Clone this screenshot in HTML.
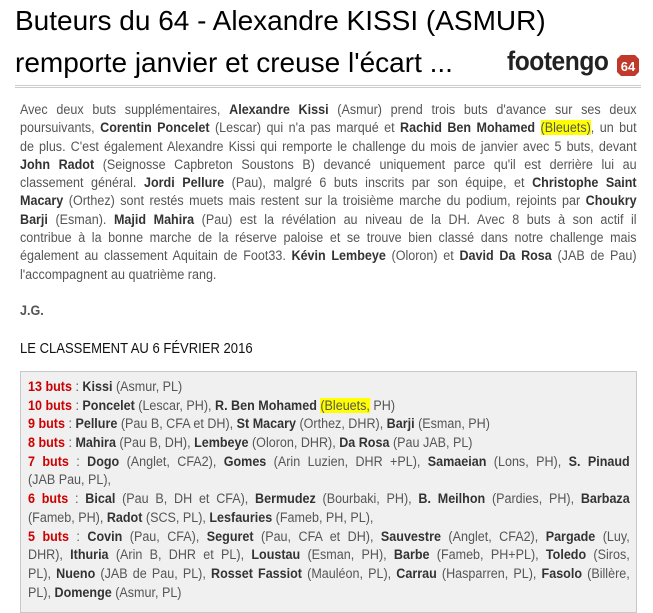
<!DOCTYPE html>
<html><head><meta charset="utf-8"><style>
body{margin:0;background:#fff;width:653px;height:602px;overflow:hidden;font-family:"Liberation Sans",Arial,sans-serif;position:relative}
.t{position:absolute;left:15px;white-space:nowrap;font-size:28px;color:#000}
.rule{position:absolute;left:15px;top:85px;width:626px;height:1px;border-top:1px solid #ccc;border-bottom:1px solid #ccc}
.logo{position:absolute;left:507px;top:46px;font-weight:bold;font-size:27px;color:#222;letter-spacing:-0.5px;transform:scaleX(0.91);transform-origin:0 0;white-space:nowrap}
.hex{position:absolute;left:617px;top:55px;width:22px;height:21px}
.wrap{position:absolute;left:20px;width:663px;font-size:13.5px;color:#555;transform:scaleX(0.93);transform-origin:0 0}
.l{white-space:nowrap;text-align:justify;text-align-last:justify;height:18.3px;line-height:18.3px}
.l.e{text-align-last:left}
b{color:#333}
.y{background:#ff0}
.box{position:absolute;left:20px;top:371px;width:615px;height:240px;background:#f0f0f0;border:1px solid #c8c8c8}
.box .wrap{left:7px;top:6px;width:647px}
.box .l{height:18.7px;line-height:18.7px}
.r{color:#c00}
</style></head><body>
<div class="t" style="top:5px">Buteurs du 64 - Alexandre KISSI (ASMUR)</div>
<div class="t" style="top:47px">remporte janvier et creuse l'écart ...</div>
<div class="logo">footengo</div>
<svg class="hex" viewBox="0 0 22 21"><polygon points="4,0 18,0 22,4 22,17 18,21 4,21 0,17 0,4" fill="#c0392b"/><text x="11" y="16" font-size="13" font-weight="bold" fill="#fff" text-anchor="middle" font-family="Liberation Sans">64</text></svg>
<div class="rule"></div>
<div class="wrap" style="top:101px">
<div class="l">Avec deux buts supplémentaires, <b>Alexandre Kissi</b> (Asmur) prend trois buts d'avance sur ses deux</div>
<div class="l">poursuivants, <b>Corentin Poncelet</b> (Lescar) qui n'a pas marqué et <b>Rachid Ben Mohamed</b> <span class="y">(Bleuets)</span>, un but</div>
<div class="l">de plus. C'est également Alexandre Kissi qui remporte le challenge du mois de janvier avec 5 buts, devant</div>
<div class="l"><b>John Radot</b> (Seignosse Capbreton Soustons B) devancé uniquement parce qu'il est derrière lui au</div>
<div class="l">classement général. <b>Jordi Pellure</b> (Pau), malgré 6 buts inscrits par son équipe, et <b>Christophe Saint</b></div>
<div class="l"><b>Macary</b> (Orthez) sont restés muets mais restent sur la troisième marche du podium, rejoints par <b>Choukry</b></div>
<div class="l"><b>Barji</b> (Esman). <b>Majid Mahira</b> (Pau) est la révélation au niveau de la DH. Avec 8 buts à son actif il</div>
<div class="l">contribue à la bonne marche de la réserve paloise et se trouve bien classé dans notre challenge mais</div>
<div class="l">également au classement Aquitain de Foot33. <b>Kévin Lembeye</b> (Oloron) et <b>David Da Rosa</b> (JAB de Pau)</div>
<div class="l e">l'accompagnent au quatrième rang.</div>
<div class="l e">&nbsp;</div>
<div class="l e"><b style="color:#555">J.G.</b></div>
</div>
<div style="position:absolute;left:20px;top:341px;font-size:14.5px;color:#111;white-space:nowrap;transform:scaleX(0.9);transform-origin:0 0">LE CLASSEMENT AU 6 FÉVRIER 2016</div>
<div class="box"><div class="wrap">
<div class="l e"><b class="r">13 buts</b> : <b>Kissi</b> (Asmur, PL)</div>
<div class="l e"><b class="r">10 buts</b> : <b>Poncelet</b> (Lescar, PH), <b>R. Ben Mohamed</b> <span class="y">(Bleuets,</span> PH)</div>
<div class="l e"><b class="r">9 buts</b> : <b>Pellure</b> (Pau B, CFA et DH), <b>St Macary</b> (Orthez, DHR), <b>Barji</b> (Esman, PH)</div>
<div class="l e"><b class="r">8 buts</b> : <b>Mahira</b> (Pau B, DH), <b>Lembeye</b> (Oloron, DHR), <b>Da Rosa</b> (Pau JAB, PL)</div>
<div class="l"><b class="r">7 buts</b> : <b>Dogo</b> (Anglet, CFA2), <b>Gomes</b> (Arin Luzien, DHR +PL), <b>Samaeian</b> (Lons, PH), <b>S. Pinaud</b></div>
<div class="l e">(JAB Pau, PL),</div>
<div class="l"><b class="r">6 buts</b> : <b>Bical</b> (Pau B, DH et CFA), <b>Bermudez</b> (Bourbaki, PH), <b>B. Meilhon</b> (Pardies, PH), <b>Barbaza</b></div>
<div class="l e">(Fameb, PH), <b>Radot</b> (SCS, PL), <b>Lesfauries</b> (Fameb, PH, PL),</div>
<div class="l"><b class="r">5 buts</b> : <b>Covin</b> (Pau, CFA), <b>Seguret</b> (Pau, CFA et DH), <b>Sauvestre</b> (Anglet, CFA2), <b>Pargade</b> (Luy,</div>
<div class="l">DHR), <b>Ithuria</b> (Arin B, DHR et PL), <b>Loustau</b> (Esman, PH), <b>Barbe</b> (Fameb, PH+PL), <b>Toledo</b> (Siros,</div>
<div class="l">PL), <b>Nueno</b> (JAB de Pau, PL), <b>Rosset Fassiot</b> (Mauléon, PL), <b>Carrau</b> (Hasparren, PL), <b>Fasolo</b> (Billère,</div>
<div class="l e">PL), <b>Domenge</b> (Asmur, PL)</div>
</div></div>
</body></html>
